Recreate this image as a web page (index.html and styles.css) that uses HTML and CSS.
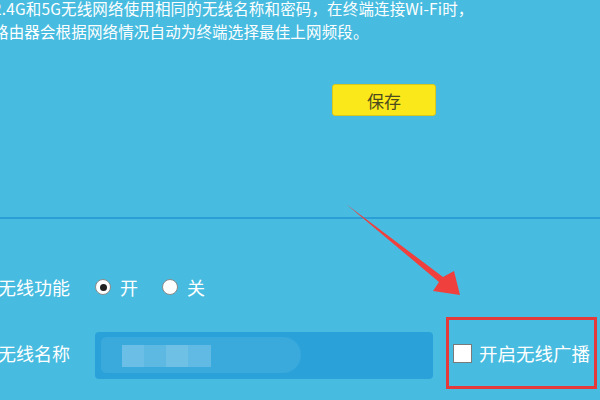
FILE: index.html
```html
<!DOCTYPE html>
<html lang="zh-CN">
<head>
<meta charset="utf-8">
<link rel="stylesheet" href="styles.css">
</head>
<body>
<div class="page">
  <p class="desc">2.4G和5G无线网络使用相同的无线名称和密码，在终端连接Wi-Fi时，<br>路由器会根据网络情况自动为终端选择最佳上网频段。</p>
  <div class="save-row"><button class="save">保存</button></div>
  <div class="divider"></div>
  <div class="row row-func">
    <span class="label">无线功能</span>
    <span class="radio checked"></span><span class="opt">开</span>
    <span class="radio"></span><span class="opt">关</span>
  </div>
  <div class="row row-name">
    <span class="label">无线名称</span>
    <div class="input">
      <div class="blur"></div>
      <div class="pix p1"></div>
      <div class="pix p2"></div>
      <div class="pix p3"></div>
      <div class="pix p4"></div>
    </div>
    <div class="highlight">
      <span class="checkbox"></span>
      <span class="cb-text">开启无线广播</span>
    </div>
  </div>
  <svg class="arrow" width="600" height="400" viewBox="0 0 600 400">
    <polygon points="346,204 443,277 454,271 460,295 433,291 439,282" fill="#f0403d"/>
  </svg>
</div>
</body>
</html>
```
FILE: styles.css
```css
html, body {
  margin: 0;
  padding: 0;
}
body {
  background: #47bce0;
  width: 600px;
  height: 400px;
  overflow: hidden;
  font-family: "Noto Sans CJK SC", "Noto Sans", sans-serif;
  color: #ffffff;
}
.page {
  position: relative;
  width: 600px;
  height: 400px;
  overflow: hidden;
}
.desc {
  margin: -3px 0 0 -7px;
  font-size: 15.5px;
  line-height: 23px;
  letter-spacing: 0.15px;
  white-space: nowrap;
}
.save-row {
  margin-top: 41px;
  padding-left: 332px;
  height: 32px;
}
.save {
  width: 104px;
  height: 32px;
  border: 1px solid #d8c81a;
  border-radius: 3px;
  background: #fbe81a;
  color: #4c4a1e;
  font-family: "Noto Sans CJK SC", sans-serif;
  font-size: 17px;
  padding: 0;
}
.divider {
  margin-top: 101px;
  height: 2px;
  background: #2a9ed5;
}
.row {
  display: flex;
  align-items: center;
}
.label {
  width: 97px;
  margin-left: -2px;
  font-size: 18px;
  flex: none;
}
.row-func {
  margin-top: 53px;
  height: 30px;
}
.radio {
  width: 14px;
  height: 14px;
  border-radius: 50%;
  background: #ffffff;
  border: 1px solid #8a8a8a;
  display: flex;
  align-items: center;
  justify-content: center;
  flex: none;
}
.radio.checked::after {
  content: "";
  width: 7px;
  height: 7px;
  border-radius: 50%;
  background: #222222;
}
.opt {
  font-size: 18px;
  margin-left: 9px;
  margin-right: 24px;
}
.row-name {
  margin-top: 15px;
}
.input {
  position: relative;
  width: 338px;
  height: 47px;
  margin-top: 5px;
  border-radius: 4px;
  background: #2aa2d9;
  flex: none;
  overflow: hidden;
}
.blur {
  position: absolute;
  left: 6px;
  top: 5px;
  width: 200px;
  height: 36px;
  border-radius: 18px 60px 60px 18px;
  background: rgba(255, 255, 255, 0.08);
}
.pix {
  position: absolute;
  top: 13px;
  height: 22px;
  background: rgba(255, 255, 255, 0.25);
}
.p1 { left: 27px; width: 22px; }
.p2 { left: 49px; width: 22px; background: rgba(255, 255, 255, 0.18); }
.p3 { left: 71px; width: 22px; background: rgba(255, 255, 255, 0.27); }
.p4 { left: 93px; width: 23px; background: rgba(255, 255, 255, 0.2); }
.highlight {
  margin-left: 13px;
  width: 141px;
  height: 66px;
  border: 3px solid #e53a3b;
  display: flex;
  align-items: center;
  padding-left: 4px;
  box-sizing: content-box;
  flex: none;
}
.checkbox {
  width: 17px;
  height: 17px;
  background: #ffffff;
  border: 1px solid #7a7a7a;
  flex: none;
}
.cb-text {
  margin-left: 7px;
  font-size: 18.5px;
  white-space: nowrap;
}
.arrow {
  position: absolute;
  left: 0;
  top: 0;
  pointer-events: none;
}
```
